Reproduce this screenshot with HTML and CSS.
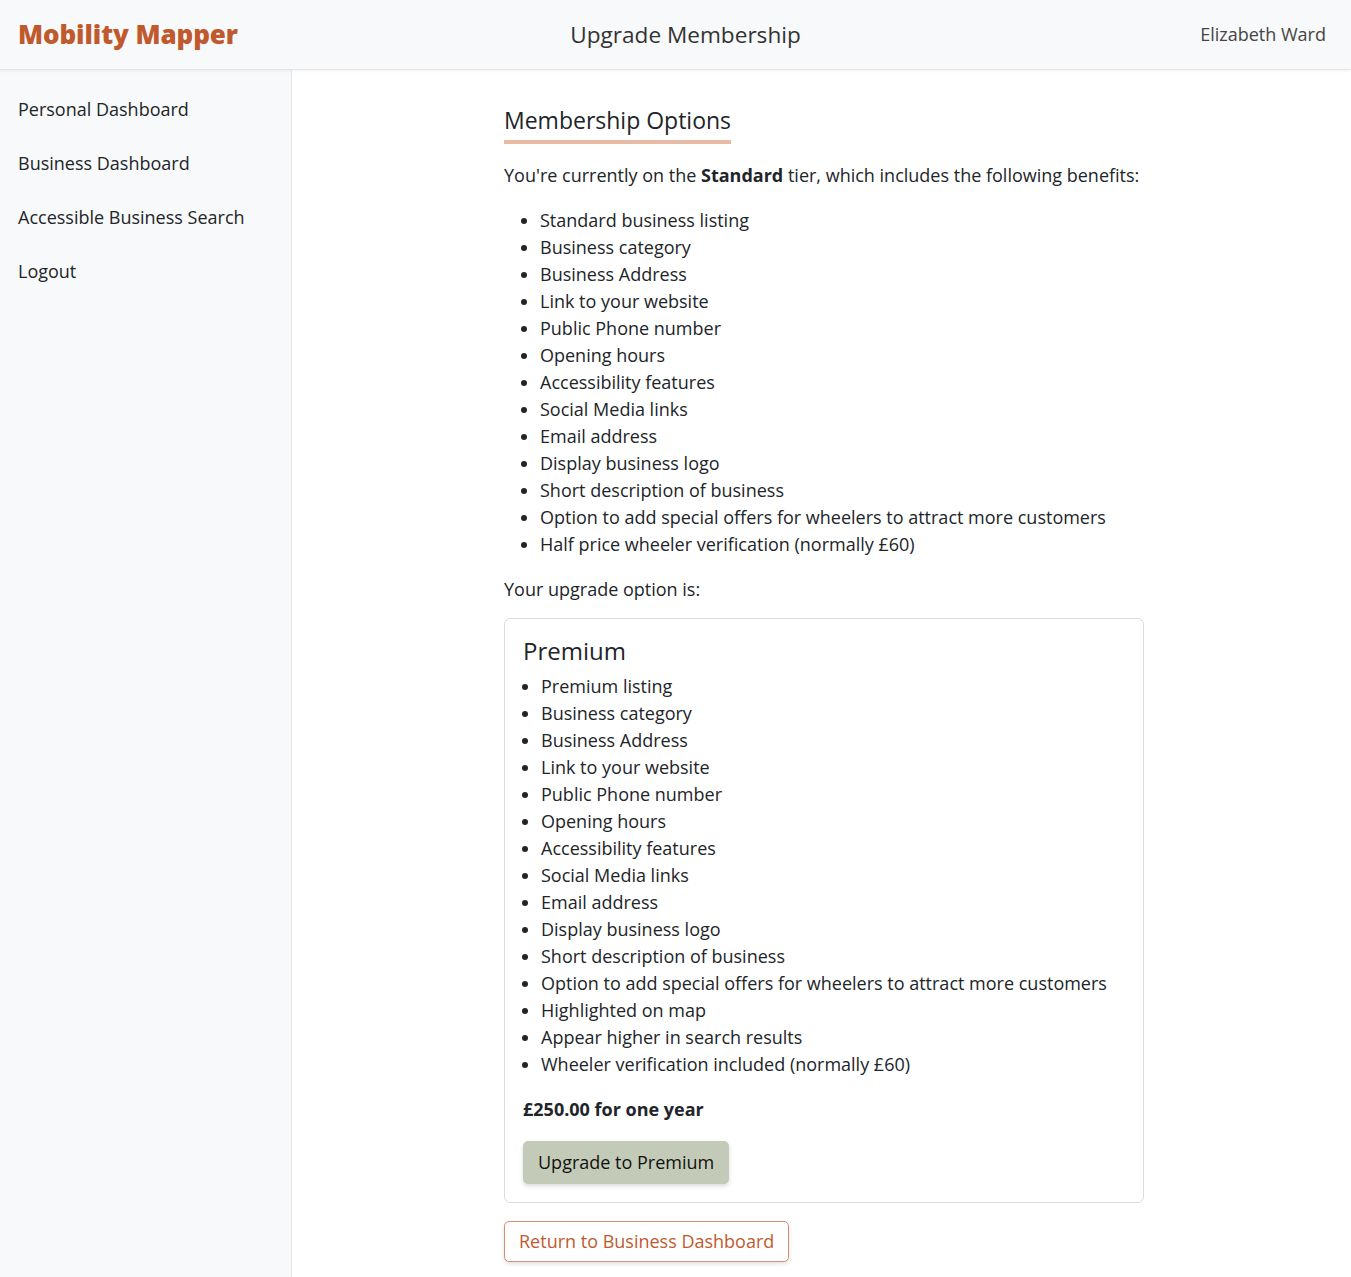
FILE: index.html
```html
<!DOCTYPE html>
<html lang="en">
<head>
<meta charset="utf-8">
<title>Upgrade Membership</title>
<link rel="stylesheet" href="styles.css">
</head>
<body>
<header class="topbar">
  <div class="logo">Mobility Mapper</div>
  <div class="page-title">Upgrade Membership</div>
  <div class="user">Elizabeth Ward</div>
</header>
<div class="layout">
  <nav class="sidebar">
    <a class="nav-link" href="#">Personal Dashboard</a>
    <a class="nav-link" href="#">Business Dashboard</a>
    <a class="nav-link" href="#">Accessible Business Search</a>
    <a class="nav-link" href="#">Logout</a>
  </nav>
  <main class="main">
    <div class="content">
      <h2 class="section-title">Membership Options</h2>
      <p class="text">You're currently on the <strong>Standard</strong> tier, which includes the following benefits:</p>
      <ul class="benefits">
        <li>Standard business listing</li>
        <li>Business category</li>
        <li>Business Address</li>
        <li>Link to your website</li>
        <li>Public Phone number</li>
        <li>Opening hours</li>
        <li>Accessibility features</li>
        <li>Social Media links</li>
        <li>Email address</li>
        <li>Display business logo</li>
        <li>Short description of business</li>
        <li>Option to add special offers for wheelers to attract more customers</li>
        <li>Half price wheeler verification (normally £60)</li>
      </ul>
      <p class="text text-intro">Your upgrade option is:</p>
      <div class="card">
        <h3 class="card-title">Premium</h3>
        <ul class="benefits card-list">
          <li>Premium listing</li>
          <li>Business category</li>
          <li>Business Address</li>
          <li>Link to your website</li>
          <li>Public Phone number</li>
          <li>Opening hours</li>
          <li>Accessibility features</li>
          <li>Social Media links</li>
          <li>Email address</li>
          <li>Display business logo</li>
          <li>Short description of business</li>
          <li>Option to add special offers for wheelers to attract more customers</li>
          <li>Highlighted on map</li>
          <li>Appear higher in search results</li>
          <li>Wheeler verification included (normally £60)</li>
        </ul>
        <p class="price">£250.00 for one year</p>
        <button class="btn btn-upgrade" type="button">Upgrade to Premium</button>
      </div>
      <button class="btn btn-return" type="button">Return to Business Dashboard</button>
    </div>
  </main>
</div>
</body>
</html>
```
FILE: styles.css
```css
* { box-sizing: border-box; }
html, body { margin: 0; padding: 0; }
body {
  font-family: "Open Sans", "Noto Sans", sans-serif;
  font-size: 18px;
  line-height: 27px;
  color: #212529;
  background: #ffffff;
}
.topbar {
  height: 70px;
  display: grid;
  grid-template-columns: 1fr auto 1fr;
  align-items: center;
  padding: 0 25px 0 18px;
  background: #f8f9fa;
  border-bottom: 1px solid #e3e4e6;
  box-shadow: 0 1px 3px rgba(0,0,0,0.06);
  position: relative;
  z-index: 2;
}
.logo {
  font-size: 26px;
  font-weight: 800;
  color: #c05a2e;
  letter-spacing: -0.1px;
}
.page-title {
  font-size: 22.6px;
  color: #333333;
  margin-left: 27px;
}
.user {
  justify-self: end;
  font-size: 18px;
  color: #444444;
}
.layout {
  display: flex;
  min-height: 1207px;
}
.sidebar {
  width: 292px;
  flex: none;
  background: #f8f9fa;
  border-right: 1px solid #e6e7e9;
  padding: 12px 0;
  display: flex;
  flex-direction: column;
}
.nav-link {
  display: block;
  padding: 13.5px 18px;
  color: #212529;
  text-decoration: none;
}
.main {
  flex: 1;
  padding: 35px 20px 20px 25px;
}
.content {
  width: 640px;
  margin: 0 auto;
}
.section-title {
  display: inline-block;
  margin: 0;
  font-size: 23px;
  line-height: 30px;
  font-weight: 400;
  color: #212529;
  padding-bottom: 5px;
  border-bottom: 4px solid #e8b9a3;
}
.text { margin: 18px 0; }
.text-intro { margin-bottom: 15px; }
.benefits {
  margin: 18px 0;
  padding-left: 36px;
}
.card {
  border: 1px solid #dcdcdc;
  border-radius: 6px;
  padding: 16px 18px 18px;
  margin-top: 0;
}
.card-title {
  margin: 0;
  font-size: 24px;
  line-height: 32px;
  font-weight: 400;
}
.card-list {
  margin: 6px 0 18px;
  padding-left: 18px;
}
.price {
  font-weight: 700;
  margin: 0 0 18px;
}
.btn {
  font-family: "Open Sans", "Noto Sans", sans-serif;
  font-size: 18px;
  line-height: 27px;
  border-radius: 5px;
  cursor: pointer;
}
.btn-upgrade {
  background: #c3cbb8;
  border: 1px solid #c3cbb8;
  color: #111111;
  padding: 7px 14px;
  box-shadow: 0 2px 4px rgba(0,0,0,0.15);
}
.btn-return {
  margin-top: 18px;
  background: #ffffff;
  border: 1px solid #d98e73;
  color: #c05a2e;
  padding: 6px 14px;
  box-shadow: 0 2px 4px rgba(0,0,0,0.12);
}
```
